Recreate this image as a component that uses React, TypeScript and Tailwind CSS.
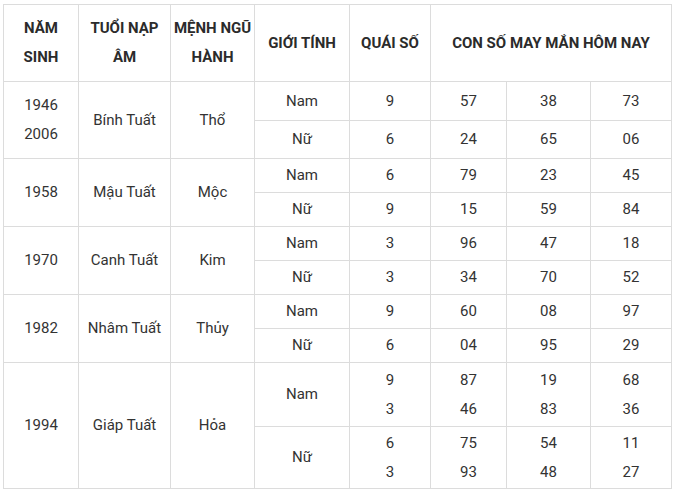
const groups = [
  {
    years: ["1946", "2006"],
    napAm: "Bính Tuất",
    menh: "Thổ",
    rows: [
      { gioi: "Nam", quai: ["9"], nums: [["57"], ["38"], ["73"]] },
      { gioi: "Nữ", quai: ["6"], nums: [["24"], ["65"], ["06"]] },
    ],
  },
  {
    years: ["1958"],
    napAm: "Mậu Tuất",
    menh: "Mộc",
    rows: [
      { gioi: "Nam", quai: ["6"], nums: [["79"], ["23"], ["45"]] },
      { gioi: "Nữ", quai: ["9"], nums: [["15"], ["59"], ["84"]] },
    ],
  },
  {
    years: ["1970"],
    napAm: "Canh Tuất",
    menh: "Kim",
    rows: [
      { gioi: "Nam", quai: ["3"], nums: [["96"], ["47"], ["18"]] },
      { gioi: "Nữ", quai: ["3"], nums: [["34"], ["70"], ["52"]] },
    ],
  },
  {
    years: ["1982"],
    napAm: "Nhâm Tuất",
    menh: "Thủy",
    rows: [
      { gioi: "Nam", quai: ["9"], nums: [["60"], ["08"], ["97"]] },
      { gioi: "Nữ", quai: ["6"], nums: [["04"], ["95"], ["29"]] },
    ],
  },
  {
    years: ["1994"],
    napAm: "Giáp Tuất",
    menh: "Hỏa",
    rows: [
      { gioi: "Nam", quai: ["9", "3"], nums: [["87", "46"], ["19", "83"], ["68", "36"]] },
      { gioi: "Nữ", quai: ["6", "3"], nums: [["75", "93"], ["54", "48"], ["11", "27"]] },
    ],
  },
];

function Cell({ lines, className = "" }: { lines: string[]; className?: string }) {
  return (
    <div className={`flex flex-col items-center justify-center bg-white text-center ${className}`}>
      {lines.map((l, i) => (
        <span key={i}>{l}</span>
      ))}
    </div>
  );
}

export default function App() {
  return (
    <div className="min-h-screen bg-white pl-[3px] pt-[4px] font-['Roboto',sans-serif] text-[15px] leading-[29px] text-[#333]">
      <div className="grid w-[669px] grid-cols-[74px_91px_83px_94px_80px_75px_83px_80px] grid-rows-[76px_38px_37px_33px_33px_33px_33px_33px_33px_63px_61px] gap-px bg-[#dcdcdc] p-px">
        {/* Header */}
        <Cell lines={["NĂM", "SINH"]} className="font-bold text-[#2b2b2b]" />
        <Cell lines={["TUỔI NẠP", "ÂM"]} className="font-bold text-[#2b2b2b]" />
        <Cell lines={["MỆNH NGŨ", "HÀNH"]} className="font-bold text-[#2b2b2b]" />
        <Cell lines={["GIỚI TÍNH"]} className="font-bold text-[#2b2b2b]" />
        <Cell lines={["QUÁI SỐ"]} className="font-bold text-[#2b2b2b]" />
        <Cell lines={["CON SỐ MAY MẮN HÔM NAY"]} className="col-span-3 font-bold text-[#2b2b2b]" />

        {groups.map((g) => (
          <>
            <Cell key={g.years[0]} lines={g.years} className="row-span-2" />
            <Cell lines={[g.napAm]} className="row-span-2" />
            <Cell lines={[g.menh]} className="row-span-2" />
            {g.rows.map((r) => (
              <>
                <Cell lines={[r.gioi]} />
                <Cell lines={r.quai} />
                {r.nums.map((n, i) => (
                  <Cell key={i} lines={n} />
                ))}
              </>
            ))}
          </>
        ))}
      </div>
    </div>
  );
}
